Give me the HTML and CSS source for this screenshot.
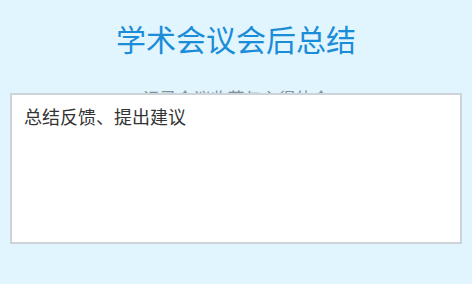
FILE: index.html
```html
<!DOCTYPE html>
<html lang="zh-CN">
<head>
    <meta charset="UTF-8">
    <meta name="viewport" content="width=device-width, initial-scale=1.0">
    <title>学术会议会后总结</title>
    <link rel="stylesheet" href="styles.css">
</head>
<body>
    <div class="container">
        <h1>学术会议会后总结</h1>
        <p class="subtitle">记录会议收获与心得体会</p>
        <!-- 总结输入框 -->
        <textarea class="summary" id="summary" name="summary">总结反馈、提出建议</textarea>
    </div>
</body>
</html>
```

FILE: styles.css
```css
body {
    font-family: "Noto Sans CJK SC", "Noto Sans", sans-serif;
    background-color: #e1f5fe;
    margin: 0;
    padding: 0;
}

.container {
    padding: 20px 10px 0;
}

h1 {
    margin: 0;
    text-align: center;
    font-size: 30px;
    font-weight: normal;
    line-height: 36px;
    color: #1a8cd8;
}

.subtitle {
    margin: 28px 0 -19px;
    text-align: center;
    font-size: 17px;
    line-height: 28px;
    color: #7f909c;
}

.summary {
    position: relative; /* nằm đè lên dòng phụ đề */
    display: block;
    width: 100%;
    height: 151px;
    margin: 0;
    padding: 8px 12px;
    box-sizing: border-box;
    border: 2px solid #cdd3d8;
    background-color: white;
    font-family: "Noto Sans CJK SC", "Noto Sans", sans-serif;
    font-size: 18px;
    line-height: 27px;
    color: #333;
    resize: none;
    outline: none;
}
```
